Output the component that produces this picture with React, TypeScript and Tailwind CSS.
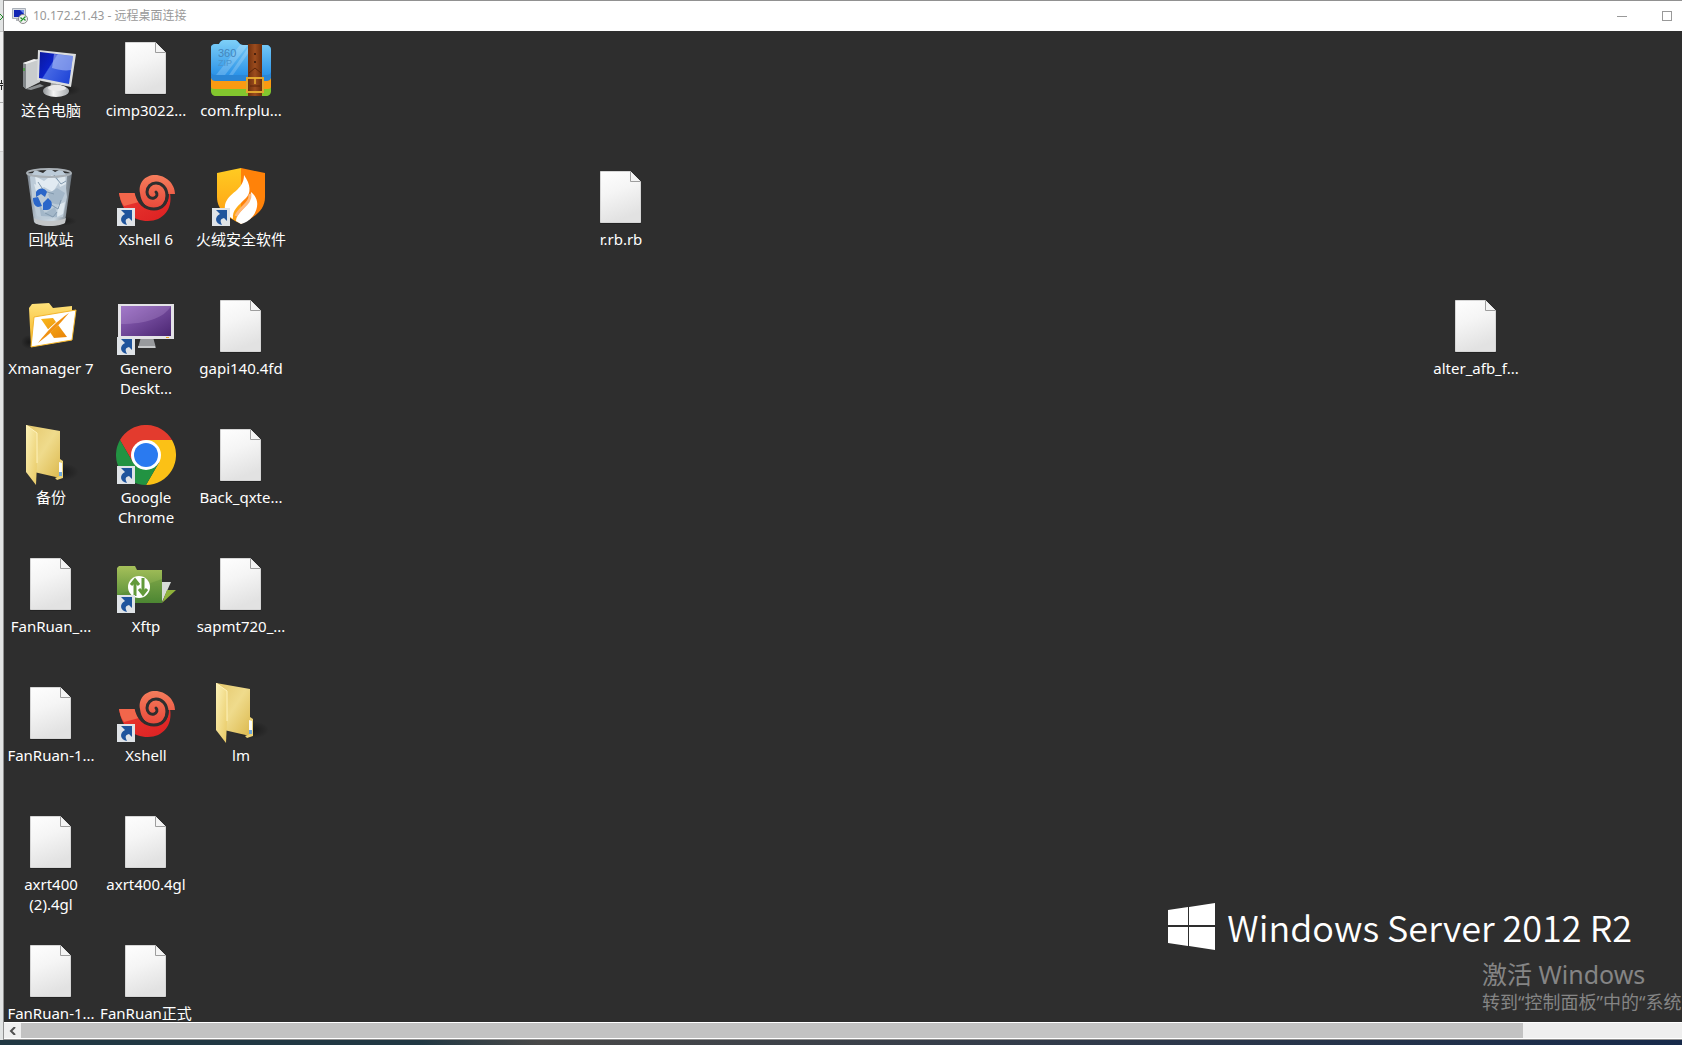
import type { ComponentType } from "react";

type DesktopEntry = {
  name: string;
  place: string;
  Icon: ComponentType;
};

function Gradients() {
  return (
    <svg className="absolute h-0 w-0" aria-hidden="true">
      <defs>
        <linearGradient id="paper" x1="0" y1="0" x2="0.3" y2="1">
          <stop offset="0" stopColor="#fefefe" />
          <stop offset="0.45" stopColor="#f5f5f5" />
          <stop offset="1" stopColor="#e2e2e2" />
        </linearGradient>
        <linearGradient id="blueScreen" x1="0" y1="0" x2="1" y2="0.6">
          <stop offset="0" stopColor="#0a189c" />
          <stop offset="0.42" stopColor="#0c22c8" />
          <stop offset="0.45" stopColor="#4668e4" />
          <stop offset="1" stopColor="#2348d8" />
        </linearGradient>
        <linearGradient id="silver" x1="0" y1="0" x2="1" y2="0">
          <stop offset="0" stopColor="#8f9396" />
          <stop offset="0.4" stopColor="#f4f4f4" />
          <stop offset="1" stopColor="#a9adb0" />
        </linearGradient>
        <linearGradient id="zipBlue" x1="0" y1="0" x2="0" y2="1">
          <stop offset="0" stopColor="#7fd0f8" />
          <stop offset="1" stopColor="#2b93e8" />
        </linearGradient>
        <linearGradient id="leather" x1="0" y1="0" x2="1" y2="0">
          <stop offset="0" stopColor="#6f300e" />
          <stop offset="0.5" stopColor="#9c4c1e" />
          <stop offset="1" stopColor="#6a2d0c" />
        </linearGradient>
        <linearGradient id="shellDark" x1="0" y1="0" x2="1" y2="1">
          <stop offset="0" stopColor="#e93a30" />
          <stop offset="1" stopColor="#dc1f22" />
        </linearGradient>
        <linearGradient id="shellLight" x1="0" y1="0" x2="0" y2="1">
          <stop offset="0" stopColor="#f57d5c" />
          <stop offset="1" stopColor="#e94a3b" />
        </linearGradient>
        <linearGradient id="shieldLeft" x1="0" y1="0" x2="0" y2="1">
          <stop offset="0" stopColor="#ffcb22" />
          <stop offset="1" stopColor="#ff9c12" />
        </linearGradient>
        <linearGradient id="folderBack" x1="0" y1="0" x2="1" y2="1">
          <stop offset="0" stopColor="#e4c76b" />
          <stop offset="0.5" stopColor="#efdb8c" />
          <stop offset="1" stopColor="#dcb94e" />
        </linearGradient>
        <linearGradient id="folderFront" x1="0" y1="0" x2="1" y2="1">
          <stop offset="0" stopColor="#fcf2b8" />
          <stop offset="1" stopColor="#e8c964" />
        </linearGradient>
        <linearGradient id="amber" x1="0" y1="0" x2="0" y2="1">
          <stop offset="0" stopColor="#ffe27a" />
          <stop offset="1" stopColor="#f3ae18" />
        </linearGradient>
        <linearGradient id="xmark" x1="0" y1="0" x2="1" y2="1">
          <stop offset="0" stopColor="#f9b81c" />
          <stop offset="1" stopColor="#e88208" />
        </linearGradient>
        <linearGradient id="purpleScreen" x1="0" y1="0" x2="1" y2="1">
          <stop offset="0" stopColor="#9468bf" />
          <stop offset="1" stopColor="#4b2672" />
        </linearGradient>
        <linearGradient id="ftpGreen" x1="0" y1="0" x2="0" y2="1">
          <stop offset="0" stopColor="#a6c05a" />
          <stop offset="1" stopColor="#4f8a35" />
        </linearGradient>
        <linearGradient id="glass" x1="0" y1="0" x2="1" y2="0">
          <stop offset="0" stopColor="#77808a" />
          <stop offset="0.2" stopColor="#b5c3d0" />
          <stop offset="0.6" stopColor="#cbd8e2" />
          <stop offset="1" stopColor="#6b757e" />
        </linearGradient>
        <radialGradient id="floorShadow">
          <stop offset="0" stopColor="#111" stopOpacity="0.7" />
          <stop offset="1" stopColor="#111" stopOpacity="0" />
        </radialGradient>
      </defs>
    </svg>
  );
}

function ShortcutArrow() {
  return (
    <g>
      <path d="M1 41h18v18H1z" fill="#dfe3e7" />
      <path d="M5 43h11v11l-3-3c-4 1-4 3-2 7-7-1-8-8-2-11z" fill="#1f549c" />
    </g>
  );
}

function FileIcon() {
  return (
    <svg viewBox="0 0 60 60" className="size-[60px]" aria-hidden="true">
      <path d="M9.5 4.5h30l10 10v41h-40z" fill="url(#paper)" stroke="#d6d6d6" />
      <path d="M9 56.5h41" stroke="#191919" opacity="0.5" />
      <path d="M39.5 4.5v10h10" fill="#f4f4f4" stroke="#9d9d9d" />
    </svg>
  );
}

function ComputerIcon() {
  return (
    <svg viewBox="0 0 60 60" className="size-[60px]" aria-hidden="true">
      <ellipse cx="43" cy="52" rx="17" ry="6" fill="url(#floorShadow)" />
      <path d="M2 25l15-4 2 23-14 7-3-3z" fill="#c9cccd" />
      <path d="M2 25l3 1v25l-3-3z" fill="#83888b" />
      <path d="M2 25l11-4 4 1-12 4z" fill="#f1f1f1" />
      <path d="M2 30h2v3H2z" fill="#4f9a4a" />
      <path d="M5 51l14-5 4 2-13 4z" fill="#8b8f91" />
      <path d="M30 44l10 3v6H29z" fill="#a4a7a9" />
      <ellipse cx="35" cy="53" rx="13" ry="6" fill="url(#silver)" />
      <ellipse cx="36" cy="50" rx="9" ry="3" fill="#e9e9e9" />
      <path d="M17 12l38 4-5 33-34-7z" fill="#dcdedf" />
      <path d="M19 14l33 4-4 28-30-6z" fill="url(#blueScreen)" />
      <path d="M33 16l19 2-2 14c-6 1-12 0-19-2z" fill="#d3defb" opacity="0.45" />
    </svg>
  );
}

function ZipIcon() {
  return (
    <svg viewBox="0 0 60 60" className="size-[60px]" aria-hidden="true">
      <path d="M0 46h60v7c0 3-2 5-5 5H5c-3 0-5-2-5-5z" fill="#82c62e" />
      <path d="M0 40h60v8c0 3-2 3-5 3H5c-3 0-5 0-5-3z" fill="#fb9a12" />
      <path
        d="M0 10c0-3 2-4 5-4h3c2-4 4-4 7-4h9c3 0 4 5 8 5h23c3 0 5 2 5 5v27c0 3-2 4-5 4H5c-3 0-5-1-5-4z"
        fill="#2a86d6"
      />
      <path
        d="M0 10c0-3 2-4 5-4h3c2-4 4-4 7-4h9c3 0 4 5 8 5h23c3 0 5 2 5 5v21c0 3-2 4-5 4H5c-3 0-5-1-5-4z"
        fill="url(#zipBlue)"
      />
      <path d="M29 7h8L14 37H5zM39 7h4L22 37h-4z" fill="#fff" opacity="0.2" />
      <text x="7" y="19" fontSize="11" fill="#4586bc" className="font-['Liberation_Sans']">360</text>
      <text x="7" y="28" fontSize="9" fill="#4c93cc" className="font-['Liberation_Sans']">ZIP</text>
      <path d="M37 6h14v52H37z" fill="url(#leather)" />
      <path d="M38 35l6-5 6 5" fill="none" stroke="#5c2509" />
      <circle cx="44" cy="16" r="1" fill="#32160a" />
      <circle cx="44" cy="24" r="1" fill="#32160a" />
      <path d="M36 40h16v14H36z" fill="none" stroke="#e1a62e" strokeWidth="2" />
      <path d="M44 40v6" stroke="#e8ae30" strokeWidth="1.5" />
      <path d="M39 48h10" stroke="#5c2509" />
    </svg>
  );
}

function RecycleBinIcon() {
  return (
    <svg viewBox="0 0 60 60" className="size-[60px]" aria-hidden="true">
      <ellipse cx="40" cy="54" rx="16" ry="5" fill="url(#floorShadow)" />
      <path d="M6 6l7 49c5 5 25 5 31 0l7-49z" fill="url(#glass)" />
      <path d="M9 10l5-7 8 3 6-5 6 4 6-3 6 7-1 12 1 9-4 20-16 2-10-3-5-19z" fill="#bccbd8" />
      <path d="M14 9l9 5 8-6 7 7-6 10-9-5-7 4z" fill="#e2ebf2" />
      <path d="M27 27l9-6 8 5-5 12-9-2zM18 37l6 9 10-6 3 10-17-1z" fill="#a3b7c9" />
      <path d="M36 11l8-3 1 9-6 3zM37 38l7-3-2 12-6 3zM13 17l6 2-3 9z" fill="#dde7ee" />
      <path d="M33 8l7 9 5-3M17 15l6 9 10 3M29 37l8 5 3-9M24 46l8 4 4-5" fill="none" stroke="#8299ae" />
      <ellipse cx="28" cy="6" rx="22" ry="4" fill="none" stroke="#a9b0b6" strokeWidth="2" />
      <path d="M13 51c6 4 25 4 32 0l-1 5c-6 4-24 4-30 0z" fill="#c3c6c8" />
      <path
        d="M15 25c2-4 8-5 11 0l-2 5-4-3-5 3zM12 31l5-1 4 9-4 1c-4-1-5-5-5-9zM22 36l5-5 3 3c2 4 0 9-4 9h-4z"
        fill="#2a66c9"
      />
    </svg>
  );
}

function XshellIcon() {
  return (
    <svg viewBox="0 0 60 60" className="size-[60px]" aria-hidden="true">
      <g transform="translate(0 -2)">
        <path d="M3 28h16c2 9 8 16 18 17 11 0 16-7 16-17h1c3 16-7 28-22 28C17 56 6 47 3 28z" fill="url(#shellDark)" />
        <path d="M3 28h16c1 4 2 7 4 9L8 41C5 37 4 33 3 28z" fill="#f2664b" />
        <path
          d="M24 28c-2-10 5-18 15-18 11 0 20 9 20 19H50c0 10-5 14-13 14-7 0-12-6-13-15z"
          fill="url(#shellLight)"
        />
        <path
          d="M20 27c2 11 9 17 18 17 9 0 13-7 13-13 0-8-5-13-11-13-5 0-9 4-9 9 0 4 3 7 7 6 3-1 4-4 2-6"
          fill="none"
          stroke="#2e2e2e"
          strokeWidth="3"
          strokeLinecap="round"
        />
      </g>
      <ShortcutArrow />
    </svg>
  );
}

function HuorongIcon() {
  return (
    <svg viewBox="0 0 60 60" className="size-[60px]" aria-hidden="true">
      <path d="M6 6l24-5v56C18 51 6 44 6 30z" fill="url(#shieldLeft)" />
      <path d="M30 1l24 5v24c0 14-12 21-24 27z" fill="#ff8209" />
      <path d="M33 8c7 10 7 18 2 23-8 8-14 12-13 21-6-4-9-8-8-14 3-13 19-14 19-30z" fill="#fff" />
      <path d="M40 25c9 7 7 17 2 24-4 5-8 7-12 8l-5-3c1-11 15-14 15-29z" fill="#fff" />
      <path d="M39 27c1 10-10 13-14 22" fill="none" stroke="#ffb87a" strokeWidth="3" />
      <ShortcutArrow />
    </svg>
  );
}

function XmanagerIcon() {
  return (
    <svg viewBox="0 0 60 60" className="size-[60px]" aria-hidden="true">
      <ellipse cx="8" cy="46" rx="8" ry="7" fill="url(#floorShadow)" />
      <path d="M8 12l3-4 17-1 4 5 19-2v34L10 51z" fill="url(#amber)" />
      <path d="M13 21l42-7-4 30-41 7z" fill="#fff" stroke="#f3b52c" />
      <path d="M20 23l12-1 14 19-13 1z" fill="url(#xmark)" />
      <path d="M48 18C36 27 27 35 17 47" fill="none" stroke="#fff" strokeWidth="4" />
      <path d="M48 17C36 25 26 35 17 47c12-9 21-18 31-30z" fill="#f09112" />
    </svg>
  );
}

function GeneroIcon() {
  return (
    <svg viewBox="0 0 60 60" className="size-[60px]" aria-hidden="true">
      <path d="M25 41h12l3 11H22z" fill="#989a9d" />
      <path d="M22 50h17v2H22z" fill="#c7c9ca" />
      <path d="M2 8h56v35H2z" fill="#e4e3e7" />
      <path d="M5 10h50v30H5z" fill="url(#purpleScreen)" />
      <path d="M5 10h50c-7 12-25 18-50 18z" fill="#d5b6ed" opacity="0.22" />
      <path d="M50 41.5h3" stroke="#e9a41c" />
      <ShortcutArrow />
    </svg>
  );
}

function ChromeIcon() {
  return (
    <svg viewBox="0 0 60 60" className="size-[60px]" aria-hidden="true">
      <path d="M4 15a30 30 0 0 1 52 0H30L17 37.5z" fill="#e33b2e" />
      <path d="M56 15a30 30 0 0 1-26 45l13-22.5L30 15z" fill="#fbc116" />
      <path d="M4 15a30 30 0 0 0 26 45l13-22.5H17z" fill="#229342" />
      <circle cx="30" cy="30" r="15" fill="#fff" />
      <circle cx="30" cy="30" r="12" fill="#2a7af0" />
      <ShortcutArrow />
    </svg>
  );
}

function FolderIcon() {
  return (
    <svg viewBox="0 0 60 60" className="size-[60px]" aria-hidden="true">
      <ellipse cx="40" cy="47" rx="18" ry="9" fill="url(#floorShadow)" />
      <path d="M5 0l34 6v47l-26-6z" fill="url(#folderBack)" />
      <path d="M39 34l3 2v17l-6 2-2-2 5-2z" fill="#ecd277" />
      <path d="M38 37l3 1v13l-3-1z" fill="#f8fafa" />
      <path d="M38 47h3v4h-3z" fill="#6ea8df" />
      <path d="M5 0l11 8v30l-1 22L5 47z" fill="url(#folderFront)" />
      <path d="M5 0l11 8v30" fill="none" stroke="#fff3bb" />
    </svg>
  );
}

function XftpIcon() {
  return (
    <svg viewBox="0 0 60 60" className="size-[60px]" aria-hidden="true">
      <path d="M45 28h10l-9 20z" fill="#d8dcd8" />
      <path d="M51 36h9L46 49z" fill="#8fb23b" />
      <path d="M1 14l2-2h16l2 4h25v33H1z" fill="url(#ftpGreen)" />
      <path d="M1 41l45-16v24H1z" fill="#427c2c" opacity="0.25" />
      <circle cx="23" cy="33" r="11" fill="#fff" />
      <path d="M19 42V27M15 31l4-5 4 5M27 24v15M23 35l4 5 4-5" fill="none" stroke="#629a3a" strokeWidth="3" />
      <ShortcutArrow />
    </svg>
  );
}

function RemoteIcon() {
  return (
    <svg viewBox="0 0 16 16" className="size-4" aria-hidden="true">
      <path d="M.5.5h13v10H.5z" fill="#d9dde3" stroke="#aab0b8" />
      <path d="M2 2h10v7H2z" fill="#1226b4" />
      <path d="M8 2h4v4z" fill="#6c8cec" />
      <path d="M4 11h5v2H4z" fill="#b5b8bd" />
      <circle cx="11" cy="11" r="4.5" fill="#f2f2f2" stroke="#8b8b8b" />
      <path d="M8.5 9.5l2 2-2 2M13.5 8.5l-2 2 2 2" fill="none" stroke="#27952c" strokeWidth="1.3" />
    </svg>
  );
}

const entries: DesktopEntry[] = [
  { name: "这台电脑", place: "col-start-1 row-start-1", Icon: ComputerIcon },
  { name: "回收站", place: "col-start-1 row-start-2", Icon: RecycleBinIcon },
  { name: "Xmanager 7", place: "col-start-1 row-start-3", Icon: XmanagerIcon },
  { name: "备份", place: "col-start-1 row-start-4", Icon: FolderIcon },
  { name: "FanRuan_...", place: "col-start-1 row-start-5", Icon: FileIcon },
  { name: "FanRuan-1...", place: "col-start-1 row-start-6", Icon: FileIcon },
  { name: "axrt400 (2).4gl", place: "col-start-1 row-start-7", Icon: FileIcon },
  { name: "FanRuan-1...", place: "col-start-1 row-start-8", Icon: FileIcon },
  { name: "cimp3022...", place: "col-start-2 row-start-1", Icon: FileIcon },
  { name: "Xshell 6", place: "col-start-2 row-start-2", Icon: XshellIcon },
  { name: "Genero Deskt...", place: "col-start-2 row-start-3", Icon: GeneroIcon },
  { name: "Google Chrome", place: "col-start-2 row-start-4", Icon: ChromeIcon },
  { name: "Xftp", place: "col-start-2 row-start-5", Icon: XftpIcon },
  { name: "Xshell", place: "col-start-2 row-start-6", Icon: XshellIcon },
  { name: "axrt400.4gl", place: "col-start-2 row-start-7", Icon: FileIcon },
  { name: "FanRuan正式", place: "col-start-2 row-start-8", Icon: FileIcon },
  { name: "com.fr.plu...", place: "col-start-3 row-start-1", Icon: ZipIcon },
  { name: "火绒安全软件", place: "col-start-3 row-start-2", Icon: HuorongIcon },
  { name: "gapi140.4fd", place: "col-start-3 row-start-3", Icon: FileIcon },
  { name: "Back_qxte...", place: "col-start-3 row-start-4", Icon: FileIcon },
  { name: "sapmt720_...", place: "col-start-3 row-start-5", Icon: FileIcon },
  { name: "lm", place: "col-start-3 row-start-6", Icon: FolderIcon },
  { name: "r.rb.rb", place: "col-start-7 row-start-2", Icon: FileIcon },
  { name: "alter_afb_f...", place: "col-start-16 row-start-3", Icon: FileIcon },
];

function DesktopItem({ name, place, Icon }: DesktopEntry) {
  return (
    <button className={`${place} flex flex-col items-center gap-0.5 pt-[7px] pr-px`}>
      <Icon />
      <span className="w-24 text-center text-[15px] leading-5 text-white">{name}</span>
    </button>
  );
}

function TitleBar() {
  return (
    <header className="flex h-[30px] shrink-0 items-center gap-1 bg-white pl-2 text-[#999]">
      <RemoteIcon />
      <h1 className="grow pl-px text-xs">10.172.21.43 - 远程桌面连接</h1>
      <button aria-label="最小化" className="flex h-full w-[50px] items-center justify-center">
        <span className="h-px w-2.5 bg-[#999]" />
      </button>
      <button aria-label="最大化" className="flex h-full w-[31px] items-center justify-center">
        <span className="size-2.5 border border-[#999]" />
      </button>
    </header>
  );
}

function Wallpaper() {
  return (
    <div className="absolute right-0 bottom-2 flex flex-col items-end whitespace-nowrap">
      <div className="mr-[50px] flex items-center gap-3 text-white">
        <svg viewBox="0 0 47 47" className="size-[47px]" fill="#fff" aria-hidden="true">
          <path d="M0 7l20-3v18H0zM21 4l26-4v22H21zM0 24h20v19L0 40zM21 24h26v23l-26-4z" />
        </svg>
        <span className="font-['Noto_Sans_CJK_SC',sans-serif] text-[36px] leading-[56px] font-[350]">
          Windows Server 2012 R2
        </span>
      </div>
      <div className="w-[200px] pt-1 text-[#858585]">
        <p className="text-[25px] leading-8">激活 Windows</p>
        <p className="text-lg leading-6">转到“控制面板”中的“系统</p>
      </div>
    </div>
  );
}

function ScrollBar() {
  return (
    <div className="flex h-[17px] shrink-0 border-y border-white bg-[#efefef] pr-[159px]">
      <button aria-label="向左滚动" className="flex w-[17px] items-center justify-center">
        <svg viewBox="0 0 8 8" className="size-2" fill="none" stroke="#505050" strokeWidth="2" aria-hidden="true">
          <path d="M6 0L2 4l4 4" />
        </svg>
      </button>
      <div className="grow bg-[#c2c2c2]" />
    </div>
  );
}

// sliver of the window behind, visible along the left edge
function BackgroundEdge() {
  return (
    <div className="w-[3px] shrink-0 bg-[#e2e4e4]">
      <div className="h-8 border-b border-[#c4c4c4] pt-3.5">
        <svg viewBox="0 0 3 6" className="h-1.5 w-[3px]" fill="none" stroke="#1d8a24" aria-hidden="true">
          <path d="M0 0l3 3-3 3" />
        </svg>
      </div>
      <div className="h-[71px] border-b border-[#ababab] bg-[#f0f0f0] pt-12">
        <svg viewBox="0 0 3 10" className="h-2.5 w-[3px]" fill="none" stroke="#222" aria-hidden="true">
          <path d="M1.5 0v3M0 3.5h3M0 5.5h3M1.5 6v4" />
        </svg>
      </div>
      <div className="h-[49px] border-b border-[#cfcfcf] bg-[#f0f0f0]" />
    </div>
  );
}

export default function App() {
  return (
    <div className="flex h-screen flex-col overflow-hidden font-['Noto_Sans','Noto_Sans_CJK_SC',sans-serif]">
      <Gradients />
      <div className="flex min-h-0 grow">
        <BackgroundEdge />
        <main className="flex min-w-0 grow flex-col border-t border-b border-l border-[#919191]">
          <TitleBar />
          <div className="relative min-h-0 grow overflow-hidden bg-[#2e2e2e]">
            <Wallpaper />
            <div className="relative grid auto-cols-[95px] auto-rows-[129px]">
              {entries.map((entry) => (
                <DesktopItem key={entry.place} {...entry} />
              ))}
            </div>
          </div>
          <ScrollBar />
        </main>
      </div>
      <div className="h-[5px] shrink-0 bg-linear-to-r from-[#213843] from-25% via-[#484848] via-32% to-[#172a4a]" />
    </div>
  );
}
